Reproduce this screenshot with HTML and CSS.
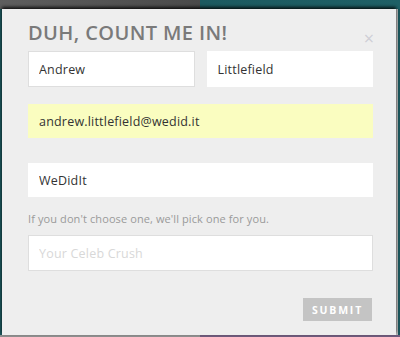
FILE: index.html
```html
<!DOCTYPE html>
<html lang="en">
<head>
    <meta charset="UTF-8">
    <meta name="viewport" content="width=device-width, initial-scale=1.0">
    <title>Duh, Count Me In</title>
    <link rel="stylesheet" href="styles.css">
</head>
<body>
    <div class="modal">
        <div class="modal-head">
            <h2>DUH, COUNT ME IN!</h2>
            <button type="button" class="close-btn" aria-label="Close">&times;</button>
        </div>
        <form class="signup" id="signupForm">
            <div class="name-row">
                <input type="text" class="field bordered" value="Andrew">
                <input type="text" class="field" value="Littlefield">
            </div>
            <input type="email" class="field autofilled" value="andrew.littlefield@wedid.it">
            <input type="text" class="field org" value="WeDidIt">
            <p class="hint">If you don't choose one, we'll pick one for you.</p>
            <input type="text" class="field bordered" placeholder="Your Celeb Crush">
            <div class="actions">
                <button type="button" class="submit-btn">SUBMIT</button>
            </div>
        </form>
    </div>
</body>
</html>
```

FILE: styles.css
```css
* {
    margin: 0;
    padding: 0;
    box-sizing: border-box;
    font-family: 'Open Sans', 'Liberation Sans', sans-serif;
}

body {
    width: 400px;
    height: 337px;
    padding: 9px 4px 2px 2px;
    overflow: hidden;
    background:
        linear-gradient(to right, #5e5e5e 0%, #4a4a4a 50%, #1c5a60 50%, #1f6066 100%) top / 100% 9px no-repeat,
        linear-gradient(to right, #8f8f8f 50%, #6f5b7c 50%) bottom / 100% 2px no-repeat,
        #1b555b;
}

.modal {
    height: 326px;
    background: #eeeeee;
    padding: 12px 23px 0 26px;
    box-shadow: 0 -2px 3px rgba(0, 0, 0, 0.8), 2px 0 0 #b9b9b9;
}

.modal-head {
    display: flex;
    justify-content: space-between;
    align-items: flex-start;
    height: 30px;
}

h2 {
    font-size: 20px;
    font-weight: 600;
    color: #7a7a7a;
    letter-spacing: 0.4px;
    line-height: 24px;
}

.close-btn {
    background: none;
    border: none;
    color: #cfcfd6;
    font-size: 18px;
    line-height: 16px;
    margin-top: 9px;
    margin-right: -1px;
    cursor: pointer;
}

.name-row {
    display: flex;
    gap: 12px;
    margin-bottom: 17px;
}

.name-row .field {
    height: 36px;
}

.field {
    display: block;
    width: 100%;
    height: 34px;
    padding: 0 11px;
    background: #fff;
    border: none;
    font-size: 12.5px;
    letter-spacing: 0.2px;
    color: #333;
    outline: none;
}

.field.bordered {
    border: 1px solid #dedede;
    padding: 0 10px;
    height: 36px;
}

.field::placeholder {
    color: #d8d8d8;
}

.autofilled {
    background: #fafdc0;
    margin-bottom: 25px;
}

.hint {
    font-size: 11px;
    letter-spacing: 0.1px;
    color: #9a9a9a;
    margin: 14px 0 9px;
    line-height: 15px;
}

.actions {
    display: flex;
    justify-content: flex-end;
    margin-top: 27px;
    padding-right: 1px;
}

.submit-btn {
    width: 69px;
    height: 23px;
    background: #c4c4c4;
    border: none;
    color: #fff;
    font-size: 10.5px;
    font-weight: 700;
    letter-spacing: 1.8px;
    cursor: pointer;
}
```
